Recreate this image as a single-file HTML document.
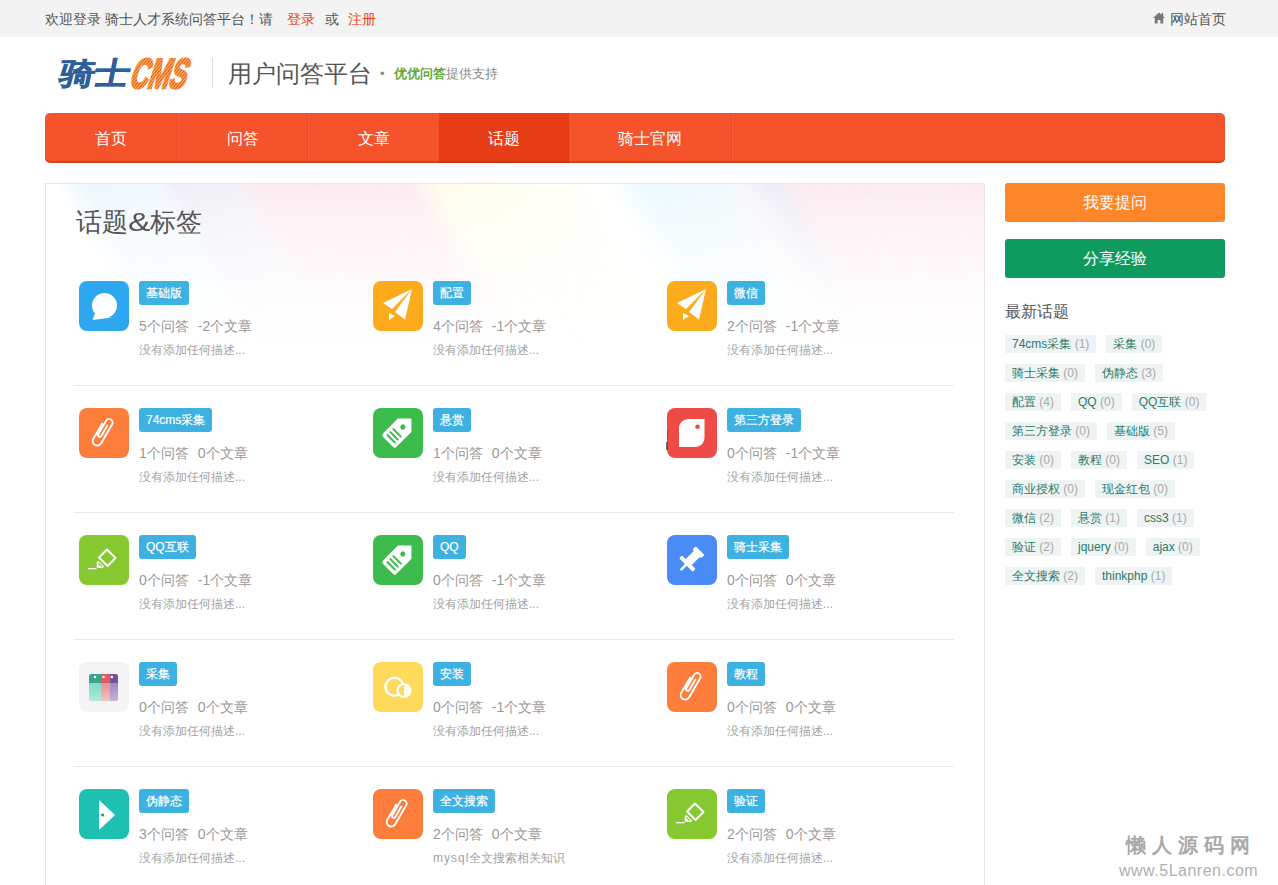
<!DOCTYPE html>
<html><head><meta charset="utf-8">
<style>
*{margin:0;padding:0;box-sizing:border-box}
html,body{width:1278px;height:885px;overflow:hidden;background:#fff;font-family:"Liberation Sans",sans-serif;color:#555}
.abs{position:absolute}
#top{position:absolute;left:0;top:0;width:1278px;height:37px;background:#f3f3f3}
#top .t{position:absolute;top:11px;font-size:14px;line-height:17px;color:#555;white-space:nowrap}
#top .red{color:#e8431c}
#logo{position:absolute;left:50px;top:52px}
#div1{position:absolute;left:212px;top:58px;width:1px;height:30px;background:#ddd}
#htitle{position:absolute;left:228px;top:60px;font-size:24px;line-height:28px;color:#555;white-space:nowrap}
#hsub{position:absolute;left:380px;top:66px;font-size:13px;line-height:16px;color:#888;white-space:nowrap}
#hsub b{color:#56a02a;font-weight:normal;-webkit-text-stroke:0.4px #56a02a}
#nav{position:absolute;left:45px;top:113px;width:1180px;height:50px;background:#f4532b;border-radius:5px;overflow:hidden;box-shadow:inset 0 -2px 0 rgba(120,40,10,.28)}
#nav .it{position:absolute;top:0;height:50px;line-height:52px;font-size:16px;color:#fff;text-align:center}
#nav .sep{position:absolute;top:0;width:1px;height:48px;background:#e84d28;box-shadow:1px 0 0 #f65d38}
#nav .act{background:#e63d17;box-shadow:inset 0 -2px 0 rgba(120,40,10,.28)}
#panel{position:absolute;left:45px;top:183px;width:940px;height:720px;border:1px solid #e6e6e6;background:#fff;overflow:hidden}
#pbg{position:absolute;left:46px;top:184px;width:938px;height:165px;
background:linear-gradient(60deg, rgba(255,255,255,0) 10%, rgba(222,240,250,.55) 13%, rgba(226,240,250,.5) 20%, rgba(232,230,242,.65) 22%, rgba(234,232,242,.6) 27%, rgba(252,226,234,.7) 30%, rgba(252,228,236,.75) 44%, rgba(255,250,220,.55) 47%, rgba(255,252,230,.45) 58%, rgba(255,255,255,0) 63%, rgba(222,244,252,.6) 67%, rgba(226,244,252,.55) 74%, rgba(240,238,246,.5) 76%, rgba(232,230,243,.75) 79.5%, rgba(252,230,237,.8) 82%, rgba(252,232,238,.85) 100%);
-webkit-mask-image:linear-gradient(to bottom, #000 0%, rgba(0,0,0,.75) 15%, rgba(0,0,0,.4) 45%, rgba(0,0,0,.15) 75%, rgba(0,0,0,0) 100%);mask-image:linear-gradient(to bottom, #000 0%, rgba(0,0,0,.75) 15%, rgba(0,0,0,.4) 45%, rgba(0,0,0,.15) 75%, rgba(0,0,0,0) 100%)}
#ptitle{position:absolute;left:76px;top:207px;font-size:26px;line-height:30px;color:#555;white-space:nowrap}
.ic{position:absolute;width:50px;height:50px;border-radius:8px;overflow:hidden}
.ic svg{position:absolute;left:0;top:0}
.tg{position:absolute;height:24px;line-height:25px;padding:0 7px;font-size:12px;color:#fff;background:#3db1e2;border-radius:3px;white-space:nowrap;-webkit-text-stroke:0.2px #fff}
.st{position:absolute;font-size:14px;line-height:16px;color:#999;white-space:nowrap}
.st span{margin-left:9px}
.ds{position:absolute;font-size:12px;line-height:14px;color:#a2a2a2;white-space:nowrap}
.hr{position:absolute;left:74px;width:880px;height:1px;background:#e8e8e8}
.btn{position:absolute;left:1005px;width:220px;height:39px;line-height:39px;border-radius:3px;color:#fff;font-size:16px;text-align:center}
#side-t{position:absolute;left:1005px;top:302px;font-size:16px;line-height:19px;color:#555}
#tags{position:absolute;left:1005px;top:335px;width:225px;font-size:0}
#tags .tt{display:inline-block;height:18px;line-height:18px;padding:0 7px;margin:0 10px 11px 0;background:#eef3f3;font-size:12px;color:#2d7a68;white-space:nowrap;vertical-align:top}
#tags .tt i{font-style:normal;color:#aaa}
#wm1{position:absolute;left:1126px;top:833px;font-size:20px;line-height:24px;font-weight:bold;color:#a9a9a9;letter-spacing:6px;white-space:nowrap}
#wm2{position:absolute;left:1119px;top:862px;font-size:16px;line-height:18px;color:#b0b0b0;white-space:nowrap;letter-spacing:0.5px}
</style></head><body>
<div id="top">
  <div class="t" style="left:45px">欢迎登录 骑士人才系统问答平台！请</div>
  <div class="t red" style="left:287px">登录</div>
  <div class="t" style="left:325px">或</div>
  <div class="t red" style="left:348px">注册</div>
  <svg class="abs" style="left:1153px;top:12px" width="12" height="12" viewBox="0 0 12 12"><path d="M6 0.5 L12 6 L10.2 6 L10.2 11.5 L7.4 11.5 L7.4 8 L4.6 8 L4.6 11.5 L1.8 11.5 L1.8 6 L0 6 Z" fill="#777"/><rect x="8.6" y="1" width="1.6" height="3" fill="#777"/></svg><div class="t" style="left:1170px">网站首页</div>
</div>
<svg id="logo" width="150" height="44" viewBox="0 0 150 44">
<defs><pattern id="stripe" width="2.6" height="2.6" patternUnits="userSpaceOnUse" patternTransform="rotate(-50)"><rect width="2.6" height="2.6" fill="#ef7019"/><rect width="2.6" height="0.8" fill="#f9bf8c"/></pattern></defs>
<g transform="translate(7 0) skewX(-11)"><text x="7.5" y="32.5" font-family="Liberation Sans, sans-serif" font-weight="900" font-size="31" fill="#2d5f9c" stroke="#2d5f9c" stroke-width="0.5" textLength="70" lengthAdjust="spacingAndGlyphs">骑士</text></g>
<g transform="translate(78 36) skewX(-18) scale(0.9 1.5)"><text x="0" y="0" font-family="Liberation Sans, sans-serif" font-weight="bold" font-size="28" fill="url(#stripe)" stroke="url(#stripe)" stroke-width="1.6">CMS</text></g>
</svg>
<div id="div1"></div>
<div id="htitle">用户问答平台</div>
<div id="hsub"><span style="position:absolute;left:0;top:0">•</span><span style="position:absolute;left:14px;top:0"><b>优优问答</b>提供支持</span></div>
<div id="nav">
  <div class="it" style="left:0;width:132px">首页</div>
  <div class="sep" style="left:132px"></div>
  <div class="it" style="left:133px;width:129px">问答</div>
  <div class="sep" style="left:262px"></div>
  <div class="it" style="left:263px;width:131px">文章</div>
  <div class="sep" style="left:394px"></div>
  <div class="it act" style="left:394px;width:130px">话题</div>
  <div class="sep" style="left:524px"></div>
  <div class="it" style="left:524px;width:162px">骑士官网</div>
  <div class="sep" style="left:686px"></div>
</div>
<div id="panel"></div>
<div id="pbg"></div>
<div id="ptitle">话题<span style="display:inline-block;transform:scaleX(1.3);transform-origin:0 0;margin:0 5px 0 0">&amp;</span>标签</div>
<!--ITEMS-->
<div class="ic" style="left:79px;top:281px;background:#2ea7f1"><svg width="50" height="50" viewBox="0 0 50 50"><circle cx="25.5" cy="24.5" r="12.5" fill="#fff"/><path d="M13.5 39 L16.5 31 L22 35.5 L33 36.5 Z" fill="#fff"/></svg></div>
<div class="tg" style="left:139px;top:281px">基础版</div>
<div class="st" style="left:139px;top:318px">5个问答<span>-2个文章</span></div>
<div class="ds" style="left:139px;top:343px">没有添加任何描述...</div>
<div class="ic" style="left:373px;top:281px;background:#fbab1b"><svg width="50" height="50" viewBox="0 0 50 50"><path d="M39 8 L10 22 L19 28 Z" fill="#fff"/><path d="M39 8 L22 31 L32 38.5 Z" fill="#fff"/><path d="M16 32 L16 39 L22 35 Z" fill="#fff"/></svg></div>
<div class="tg" style="left:433px;top:281px">配置</div>
<div class="st" style="left:433px;top:318px">4个问答<span>-1个文章</span></div>
<div class="ds" style="left:433px;top:343px">没有添加任何描述...</div>
<div class="ic" style="left:667px;top:281px;background:#fbab1b"><svg width="50" height="50" viewBox="0 0 50 50"><path d="M39 8 L10 22 L19 28 Z" fill="#fff"/><path d="M39 8 L22 31 L32 38.5 Z" fill="#fff"/><path d="M16 32 L16 39 L22 35 Z" fill="#fff"/></svg></div>
<div class="tg" style="left:727px;top:281px">微信</div>
<div class="st" style="left:727px;top:318px">2个问答<span>-1个文章</span></div>
<div class="ds" style="left:727px;top:343px">没有添加任何描述...</div>
<div class="ic" style="left:79px;top:408px;background:#fd7d3d"><svg width="50" height="50" viewBox="0 0 50 50"><g transform="translate(-1.5 -1) rotate(30 25 25)" fill="none" stroke="#fff" stroke-width="1.9" stroke-linecap="round"><path d="M26 17 V29 A1.75 1.75 0 0 1 22.5 29 V13.5 A3.5 3.5 0 0 1 29.5 13.5 V35.5 A4.5 4.5 0 0 1 20.5 35.5 V18"/></g></svg></div>
<div class="tg" style="left:139px;top:408px">74cms采集</div>
<div class="st" style="left:139px;top:445px">1个问答<span>0个文章</span></div>
<div class="ds" style="left:139px;top:470px">没有添加任何描述...</div>
<div class="ic" style="left:373px;top:408px;background:#3dbb4d"><svg width="50" height="50" viewBox="0 0 50 50"><g transform="translate(1.65 -2.8) rotate(45 25 25)"><path d="M25 9 L34 18 V39 a2 2 0 0 1 -2 2 H18 a2 2 0 0 1 -2 -2 V18 Z" fill="#fff" stroke="#fff" stroke-width="1" stroke-linejoin="round"/><circle cx="25" cy="20.5" r="2.6" fill="#3dbb4d"/><rect x="18.8" y="27.7" width="12.4" height="2" rx="1" fill="#3dbb4d"/><rect x="18.8" y="31.9" width="12.4" height="2" rx="1" fill="#3dbb4d"/><rect x="18.8" y="36.1" width="12.4" height="2" rx="1" fill="#3dbb4d"/></g></svg></div>
<div class="tg" style="left:433px;top:408px">悬赏</div>
<div class="st" style="left:433px;top:445px">1个问答<span>0个文章</span></div>
<div class="ds" style="left:433px;top:470px">没有添加任何描述...</div>
<div class="ic" style="left:667px;top:408px;background:#ee4b46"><svg width="50" height="50" viewBox="0 0 50 50"><path d="M37.5 11 V30 a9 9 0 0 1 -9 9 H12 V20 a9 9 0 0 1 9 -9 Z" fill="#fff"/><circle cx="30.5" cy="18.8" r="2.3" fill="#ee4b46"/></svg></div>
<div class="tg" style="left:727px;top:408px">第三方登录</div>
<div class="st" style="left:727px;top:445px">0个问答<span>-1个文章</span></div>
<div class="ds" style="left:727px;top:470px">没有添加任何描述...</div>
<div class="ic" style="left:79px;top:535px;background:#85c830"><svg width="50" height="50" viewBox="0 0 50 50"><g fill="none" stroke="#fff" stroke-width="2" stroke-linejoin="round"><path d="M28 14.5 L36.5 23 L28.5 31 L20 22.5 Z"/></g><path d="M19.3 25.8 L25.2 31.7 L23 33.2 L17.6 32.6 L17.8 27.5 Z" fill="#fff"/><path d="M19.4 28.2 L22.8 31.6" stroke="#85c830" stroke-width="1.3"/><rect x="9" y="33" width="8.5" height="1.3" fill="#fff"/></svg></div>
<div class="tg" style="left:139px;top:535px">QQ互联</div>
<div class="st" style="left:139px;top:572px">0个问答<span>-1个文章</span></div>
<div class="ds" style="left:139px;top:597px">没有添加任何描述...</div>
<div class="ic" style="left:373px;top:535px;background:#3dbb4d"><svg width="50" height="50" viewBox="0 0 50 50"><g transform="translate(1.65 -2.8) rotate(45 25 25)"><path d="M25 9 L34 18 V39 a2 2 0 0 1 -2 2 H18 a2 2 0 0 1 -2 -2 V18 Z" fill="#fff" stroke="#fff" stroke-width="1" stroke-linejoin="round"/><circle cx="25" cy="20.5" r="2.6" fill="#3dbb4d"/><rect x="18.8" y="27.7" width="12.4" height="2" rx="1" fill="#3dbb4d"/><rect x="18.8" y="31.9" width="12.4" height="2" rx="1" fill="#3dbb4d"/><rect x="18.8" y="36.1" width="12.4" height="2" rx="1" fill="#3dbb4d"/></g></svg></div>
<div class="tg" style="left:433px;top:535px">QQ</div>
<div class="st" style="left:433px;top:572px">0个问答<span>-1个文章</span></div>
<div class="ds" style="left:433px;top:597px">没有添加任何描述...</div>
<div class="ic" style="left:667px;top:535px;background:#4a8cf6"><svg width="50" height="50" viewBox="0 0 50 50"><g transform="translate(-2 0.8) rotate(45 25 25)" fill="#fff"><rect x="18.8" y="10.6" width="12.4" height="4.8" rx="1.5"/><rect x="20.8" y="14" width="8.4" height="13.5"/><rect x="15.4" y="26.8" width="19.3" height="4" rx="1.2"/><rect x="23.7" y="30" width="2.6" height="8.4" rx="1.3"/></g></svg></div>
<div class="tg" style="left:727px;top:535px">骑士采集</div>
<div class="st" style="left:727px;top:572px">0个问答<span>0个文章</span></div>
<div class="ds" style="left:727px;top:597px">没有添加任何描述...</div>
<div class="ic" style="left:79px;top:662px;background:#f4f4f6"><svg width="50" height="50" viewBox="0 0 50 50"><defs><linearGradient id="cg1" x1="0" y1="0" x2="0" y2="1"><stop offset="0" stop-color="#7fd9c2"/><stop offset="1" stop-color="#b5ebdd"/></linearGradient><linearGradient id="cg2" x1="0" y1="0" x2="0" y2="1"><stop offset="0" stop-color="#ec8f92"/><stop offset="1" stop-color="#f2c4c4"/></linearGradient><linearGradient id="cg3" x1="0" y1="0" x2="0" y2="1"><stop offset="0" stop-color="#a189bd"/><stop offset="1" stop-color="#c3b2d3"/></linearGradient><clipPath id="cc"><rect x="10" y="12" width="29" height="27" rx="2"/></clipPath></defs><g clip-path="url(#cc)"><rect x="10" y="12" width="12" height="9" fill="#3aa58b"/><rect x="22" y="12" width="9" height="9" fill="#e45b5d"/><rect x="31" y="12" width="8" height="9" fill="#76519a"/><rect x="10" y="21" width="12" height="18" fill="url(#cg1)"/><rect x="22" y="21" width="9" height="18" fill="url(#cg2)"/><rect x="31" y="21" width="8" height="18" fill="url(#cg3)"/></g><circle cx="16" cy="15" r="1.2" fill="#fff"/><circle cx="24.5" cy="15" r="1.2" fill="#fff"/><circle cx="32.8" cy="15" r="1.2" fill="#fff"/></svg></div>
<div class="tg" style="left:139px;top:662px">采集</div>
<div class="st" style="left:139px;top:699px">0个问答<span>0个文章</span></div>
<div class="ds" style="left:139px;top:724px">没有添加任何描述...</div>
<div class="ic" style="left:373px;top:662px;background:#fed95b"><svg width="50" height="50" viewBox="0 0 50 50"><circle cx="21.5" cy="24.8" r="9" fill="none" stroke="#fff" stroke-width="2.6"/><circle cx="31" cy="28.5" r="6.5" fill="#fed95b" stroke="#fff" stroke-width="2.2"/><path d="M31 22 a6.5 6.5 0 0 1 0 13 Z" fill="#fff" opacity=".85"/></svg></div>
<div class="tg" style="left:433px;top:662px">安装</div>
<div class="st" style="left:433px;top:699px">0个问答<span>-1个文章</span></div>
<div class="ds" style="left:433px;top:724px">没有添加任何描述...</div>
<div class="ic" style="left:667px;top:662px;background:#fd7d3d"><svg width="50" height="50" viewBox="0 0 50 50"><g transform="translate(-1.5 -1) rotate(30 25 25)" fill="none" stroke="#fff" stroke-width="1.9" stroke-linecap="round"><path d="M26 17 V29 A1.75 1.75 0 0 1 22.5 29 V13.5 A3.5 3.5 0 0 1 29.5 13.5 V35.5 A4.5 4.5 0 0 1 20.5 35.5 V18"/></g></svg></div>
<div class="tg" style="left:727px;top:662px">教程</div>
<div class="st" style="left:727px;top:699px">0个问答<span>0个文章</span></div>
<div class="ds" style="left:727px;top:724px">没有添加任何描述...</div>
<div class="ic" style="left:79px;top:789px;background:#1ec1b1"><svg width="50" height="50" viewBox="0 0 50 50"><path d="M20 11 L36 26 L20 41 Z" fill="#fff"/><circle cx="23.6" cy="26" r="1.6" fill="#1a9a8c"/></svg></div>
<div class="tg" style="left:139px;top:789px">伪静态</div>
<div class="st" style="left:139px;top:826px">3个问答<span>0个文章</span></div>
<div class="ds" style="left:139px;top:851px">没有添加任何描述...</div>
<div class="ic" style="left:373px;top:789px;background:#fd7d3d"><svg width="50" height="50" viewBox="0 0 50 50"><g transform="translate(-1.5 -1) rotate(30 25 25)" fill="none" stroke="#fff" stroke-width="1.9" stroke-linecap="round"><path d="M26 17 V29 A1.75 1.75 0 0 1 22.5 29 V13.5 A3.5 3.5 0 0 1 29.5 13.5 V35.5 A4.5 4.5 0 0 1 20.5 35.5 V18"/></g></svg></div>
<div class="tg" style="left:433px;top:789px">全文搜索</div>
<div class="st" style="left:433px;top:826px">2个问答<span>0个文章</span></div>
<div class="ds" style="left:433px;top:851px"><span style="letter-spacing:1px">mysql</span>全文搜索相关知识</div>
<div class="ic" style="left:667px;top:789px;background:#85c830"><svg width="50" height="50" viewBox="0 0 50 50"><g fill="none" stroke="#fff" stroke-width="2" stroke-linejoin="round"><path d="M28 14.5 L36.5 23 L28.5 31 L20 22.5 Z"/></g><path d="M19.3 25.8 L25.2 31.7 L23 33.2 L17.6 32.6 L17.8 27.5 Z" fill="#fff"/><path d="M19.4 28.2 L22.8 31.6" stroke="#85c830" stroke-width="1.3"/><rect x="9" y="33" width="8.5" height="1.3" fill="#fff"/></svg></div>
<div class="tg" style="left:727px;top:789px">验证</div>
<div class="st" style="left:727px;top:826px">2个问答<span>0个文章</span></div>
<div class="ds" style="left:727px;top:851px">没有添加任何描述...</div>
<div class="hr" style="top:385px"></div>
<div class="hr" style="top:512px"></div>
<div class="hr" style="top:639px"></div>
<div class="hr" style="top:766px"></div>
<!--/ITEMS-->
<div id="mark" class="abs" style="left:666px;top:430px;width:2px;height:20px"><div class="abs" style="left:0.5px;top:0;width:1.5px;height:9px;background:#444;opacity:.55"></div><div class="abs" style="left:0;top:12px;width:2px;height:8px;background:#333;opacity:.65"></div></div>
<div class="btn" style="top:183px;background:#fd862b">我要提问</div>
<div class="btn" style="top:239px;background:#0f9a5f">分享经验</div>
<div id="side-t">最新话题</div>
<div id="tags">
<span class="tt">74cms采集 <i>(1)</i></span><span class="tt">采集 <i>(0)</i></span><span class="tt">骑士采集 <i>(0)</i></span><span class="tt">伪静态 <i>(3)</i></span><span class="tt">配置 <i>(4)</i></span><span class="tt">QQ <i>(0)</i></span><span class="tt">QQ互联 <i>(0)</i></span><span class="tt">第三方登录 <i>(0)</i></span><span class="tt">基础版 <i>(5)</i></span><span class="tt">安装 <i>(0)</i></span><span class="tt">教程 <i>(0)</i></span><span class="tt">SEO <i>(1)</i></span><span class="tt">商业授权 <i>(0)</i></span><span class="tt">现金红包 <i>(0)</i></span><span class="tt">微信 <i>(2)</i></span><span class="tt">悬赏 <i>(1)</i></span><span class="tt">css3 <i>(1)</i></span><span class="tt">验证 <i>(2)</i></span><span class="tt">jquery <i>(0)</i></span><span class="tt">ajax <i>(0)</i></span><span class="tt">全文搜索 <i>(2)</i></span><span class="tt">thinkphp <i>(1)</i></span>
</div>
<div id="wm1">懒人源码网</div>
<div id="wm2">www.5Lanren.com</div>
</body></html>
